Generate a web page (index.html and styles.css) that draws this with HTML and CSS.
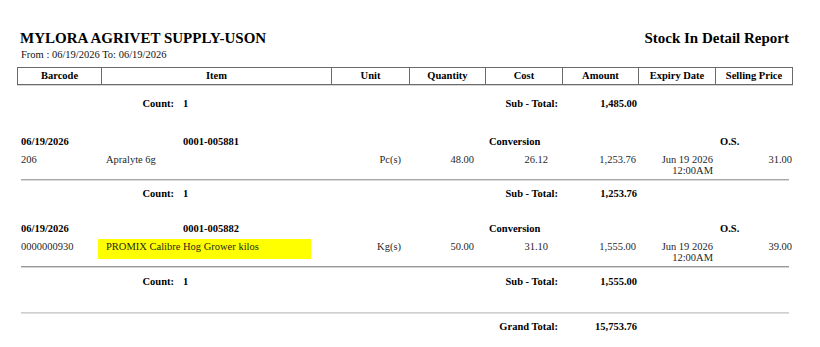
FILE: index.html
```html
<!DOCTYPE html>
<html lang="en">
<head>
<meta charset="utf-8">
<title>Stock In Detail Report</title>
<link rel="stylesheet" href="styles.css">
</head>
<body>
<div class="page">
  <div class="title-row">
    <h1 class="company">MYLORA AGRIVET SUPPLY-USON</h1>
    <h2 class="report-name">Stock In Detail Report</h2>
  </div>
  <div class="range">From : 06/19/2026 To: 06/19/2026</div>

  <div class="grid head">
    <div class="hc">Barcode</div>
    <div class="hc">Item</div>
    <div class="hc">Unit</div>
    <div class="hc">Quantity</div>
    <div class="hc">Cost</div>
    <div class="hc">Amount</div>
    <div class="hc">Expiry Date</div>
    <div class="hc">Selling Price</div>
  </div>

  <div class="grid count first-count">
    <div class="count-cell"><span class="count-label">Count:</span><span class="count-val">1</span></div>
    <div class="sub-label">Sub - Total:</div>
    <div class="sub-val">1,485.00</div>
  </div>

  <div class="grid group">
    <div class="g-date">06/19/2026</div>
    <div class="g-ref">0001-005881</div>
    <div class="g-conv">Conversion</div>
    <div class="g-os">O.S.</div>
  </div>
  <div class="grid data">
    <div class="d-code">206</div>
    <div class="d-item">Apralyte 6g</div>
    <div class="d-unit">Pc(s)</div>
    <div class="d-qty">48.00</div>
    <div class="d-cost">26.12</div>
    <div class="d-amt">1,253.76</div>
    <div class="d-exp">Jun 19 2026 12:00AM</div>
    <div class="d-sell">31.00</div>
  </div>
  <div class="sep sep-a"></div>

  <div class="grid count after-sep">
    <div class="count-cell"><span class="count-label">Count:</span><span class="count-val">1</span></div>
    <div class="sub-label">Sub - Total:</div>
    <div class="sub-val">1,253.76</div>
  </div>

  <div class="grid group second-group">
    <div class="g-date">06/19/2026</div>
    <div class="g-ref">0001-005882</div>
    <div class="g-conv">Conversion</div>
    <div class="g-os">O.S.</div>
  </div>
  <div class="grid data">
    <div class="d-code">0000000930</div>
    <div class="d-item"><span class="marker">PROMIX Calibre Hog Grower kilos</span></div>
    <div class="d-unit">Kg(s)</div>
    <div class="d-qty">50.00</div>
    <div class="d-cost">31.10</div>
    <div class="d-amt">1,555.00</div>
    <div class="d-exp">Jun 19 2026 12:00AM</div>
    <div class="d-sell">39.00</div>
  </div>
  <div class="sep sep-b"></div>

  <div class="grid count after-sep2">
    <div class="count-cell"><span class="count-label">Count:</span><span class="count-val">1</span></div>
    <div class="sub-label">Sub - Total:</div>
    <div class="sub-val">1,555.00</div>
  </div>

  <div class="sep sep-light"></div>

  <div class="grid count grand">
    <div class="count-cell"></div>
    <div class="sub-label">Grand Total:</div>
    <div class="sub-val">15,753.76</div>
  </div>
</div>
</body>
</html>
```

FILE: styles.css
```css
html, body {
  margin: 0;
  padding: 0;
  background: #ffffff;
}

body {
  font-family: "Liberation Serif", "Times New Roman", serif;
  color: #1a1a1a;
  font-size: 10.5px;
}

.page {
  width: 776px;
  padding: 29px 27px 0 17px;
}

.title-row {
  display: flex;
  justify-content: space-between;
  align-items: center;
  padding: 0 4px 0 3px;
}

.company,
.report-name {
  margin: 0;
  font-size: 15px;
  line-height: 18px;
  font-weight: bold;
  color: #000;
}

.range {
  margin-top: 1px;
  padding-left: 4px;
  line-height: 14px;
  font-size: 10.5px;
  color: #111;
}

.grid {
  display: grid;
  grid-template-columns: 85px 230px 78px 76px 77px 76px 77px 77px;
}

/* header row */
.head {
  margin-top: 5px;
}

.hc {
  box-sizing: border-box;
  height: 18px;
  line-height: 16px;
  border-top: 1px solid #6a6a6a;
  border-bottom: 1px solid #6a6a6a;
  border-right: 1px solid #6a6a6a;
  box-shadow: 0 1px 0 #d6d6d6;
  text-align: center;
  font-weight: bold;
  color: #000;
}

.hc:first-child {
  border-left: 1px solid #6a6a6a;
}

/* count / subtotal rows */
.count {
  line-height: 14px;
  font-weight: bold;
  color: #000;
}

.first-count { margin-top: 12px; }
.after-sep { margin-top: 6px; }
.after-sep2 { margin-top: 7px; }
.grand { margin-top: 6px; }

.count-cell {
  grid-column: 1 / 3;
  display: flex;
  gap: 9px;
}

.count-label {
  width: 157px;
  text-align: right;
}

.sub-label {
  grid-column: 3 / 6;
  text-align: right;
  padding-right: 5px;
}

.sub-val {
  grid-column: 6 / 7;
  text-align: right;
  padding-right: 2px;
}

/* group header rows */
.group {
  margin-top: 24px;
  line-height: 14px;
  font-weight: bold;
  color: #000;
}

.second-group { margin-top: 21px; }

.g-date {
  grid-column: 1 / 2;
  padding-left: 4px;
}

.g-ref {
  grid-column: 2 / 5;
  padding-left: 81px;
}

.g-conv {
  grid-column: 5 / 6;
  padding-left: 3px;
  white-space: nowrap;
}

.g-os {
  grid-column: 8 / 9;
  padding-left: 4px;
}

/* data rows */
.data {
  margin-top: 5px;
  line-height: 11px;
  color: #1f1f1f;
}

.d-code { padding-left: 4px; }
.d-item { padding-left: 4px; }
.d-unit { text-align: right; padding-right: 9px; }
.d-qty { text-align: right; padding-right: 12px; }
.d-cost { text-align: right; padding-right: 15px; }
.d-amt { text-align: right; padding-right: 3px; }
.d-exp { text-align: right; padding: 0 3px 0 14px; }
.d-sell { text-align: right; padding-right: 1px; }

.marker {
  background: #ffff00;
  margin-left: -8px;
  padding: 2px 52px 7px 8px;
}

/* separators */
.sep {
  margin-left: 4px;
  width: 768px;
  height: 0;
}

.sep-a {
  margin-top: 3px;
  border-top: 1px solid #a8a8a8;
  border-bottom: 1px solid #dadada;
}

.sep-b {
  margin-top: 3px;
  border-top: 1px solid #999999;
  border-bottom: 1px solid #d4d4d4;
}

.sep-light {
  margin-top: 23px;
  border-top: 1px solid #cfcfcf;
  border-bottom: 1px solid #dedede;
}
```
